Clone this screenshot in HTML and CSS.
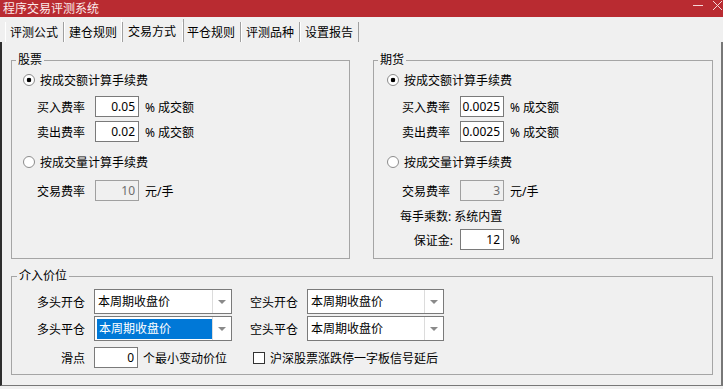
FILE: index.html
```html
<!DOCTYPE html>
<html lang="zh-CN">
<head>
    <meta charset="UTF-8">
    <title>程序交易评测系统</title>
    <link rel="stylesheet" href="styles.css">
</head>
<body>

    <div class="titlebar">
        <span class="title">程序交易评测系统</span>
        <svg class="controls" width="33" height="12" viewBox="0 0 33 12">
            <line x1="3" y1="5.5" x2="13" y2="5.5" stroke="#f4d6d7" stroke-width="1"/>
            <line x1="23" y1="1" x2="32" y2="10" stroke="#f4d6d7" stroke-width="1"/>
            <line x1="32" y1="1" x2="23" y2="10" stroke="#f4d6d7" stroke-width="1"/>
        </svg>
    </div>

    <div class="tabs">
        <div class="tab">评测公式</div>
        <div class="tab">建仓规则</div>
        <div class="tab active">交易方式</div>
        <div class="tab">平仓规则</div>
        <div class="tab">评测品种</div>
        <div class="tab">设置报告</div>
    </div>

    <div class="panel">
        <div class="top-row">
            <fieldset class="group stock">
                <legend>股票</legend>
                <div class="radio-row first">
                    <span class="radio checked"></span>
                    <span>按成交额计算手续费</span>
                </div>
                <div class="field-row fee1">
                    <span class="label">买入费率</span>
                    <input class="num" value="0.05">
                    <span class="unit">% 成交额</span>
                </div>
                <div class="field-row fee2">
                    <span class="label">卖出费率</span>
                    <input class="num" value="0.02">
                    <span class="unit">% 成交额</span>
                </div>
                <div class="radio-row second">
                    <span class="radio"></span>
                    <span>按成交量计算手续费</span>
                </div>
                <div class="field-row rate">
                    <span class="label">交易费率</span>
                    <input class="num" value="10" disabled>
                    <span class="unit">元/手</span>
                </div>
            </fieldset>

            <fieldset class="group futures">
                <legend>期货</legend>
                <div class="radio-row first">
                    <span class="radio checked"></span>
                    <span>按成交额计算手续费</span>
                </div>
                <div class="field-row fee1">
                    <span class="label">买入费率</span>
                    <input class="num" value="0.0025">
                    <span class="unit">% 成交额</span>
                </div>
                <div class="field-row fee2">
                    <span class="label">卖出费率</span>
                    <input class="num" value="0.0025">
                    <span class="unit">% 成交额</span>
                </div>
                <div class="radio-row second">
                    <span class="radio"></span>
                    <span>按成交量计算手续费</span>
                </div>
                <div class="field-row rate">
                    <span class="label">交易费率</span>
                    <input class="num" value="3" disabled>
                    <span class="unit">元/手</span>
                </div>
                <div class="mult-row">每手乘数: 系统内置</div>
                <div class="field-row deposit">
                    <span class="label right">保证金:</span>
                    <input class="num" value="12">
                    <span class="unit">%</span>
                </div>
            </fieldset>
        </div>

        <fieldset class="group entry">
            <legend>介入价位</legend>
            <div class="entry-row">
                <span class="elabel">多头开仓</span>
                <div class="combo">
                    <span class="combo-text">本周期收盘价</span>
                    <span class="combo-btn"><svg width="8" height="4" viewBox="0 0 8 4"><path d="M0 0h8L4 4z" fill="#8a8a8a"/></svg></span>
                </div>
                <span class="elabel second">空头开仓</span>
                <div class="combo">
                    <span class="combo-text">本周期收盘价</span>
                    <span class="combo-btn"><svg width="8" height="4" viewBox="0 0 8 4"><path d="M0 0h8L4 4z" fill="#8a8a8a"/></svg></span>
                </div>
            </div>
            <div class="entry-row">
                <span class="elabel">多头平仓</span>
                <div class="combo active">
                    <span class="combo-text">本周期收盘价</span>
                    <span class="combo-btn"><svg width="8" height="4" viewBox="0 0 8 4"><path d="M0 0h8L4 4z" fill="#8a8a8a"/></svg></span>
                </div>
                <span class="elabel second">空头平仓</span>
                <div class="combo">
                    <span class="combo-text">本周期收盘价</span>
                    <span class="combo-btn"><svg width="8" height="4" viewBox="0 0 8 4"><path d="M0 0h8L4 4z" fill="#8a8a8a"/></svg></span>
                </div>
            </div>
            <div class="entry-row slip">
                <span class="elabel">滑点</span>
                <div class="slip-box">
                    <input class="num" value="0">
                    <span class="slip-unit">个最小变动价位</span>
                </div>
                <span class="check"></span>
                <span class="check-text">沪深股票涨跌停一字板信号延后</span>
            </div>
        </fieldset>
    </div>

</body>
</html>
```

FILE: styles.css
```css
body {
    margin: 0;
    width: 723px;
    height: 389px;
    overflow: hidden;
    background-color: #f0f0f0;
    font-family: "Noto Sans", "Noto Sans CJK SC", sans-serif;
    font-size: 12px;
    color: #000;
}
.titlebar {
    height: 17px;
    background-color: #b92b31;
    color: #fbeaea;
    display: flex;
    justify-content: space-between;
    align-items: flex-start;
    padding-left: 3px;
    line-height: 17px;
}
.controls {
    margin-top: 0;
}
.tabs {
    height: 25px;
    display: flex;
    align-items: flex-end;
    padding-left: 5px;
}
.tab {
    box-sizing: border-box;
    width: 59px;
    height: 20px;
    padding: 2px 0 0 4px;
    line-height: 18px;
    border-left: 1px solid #fff;
    border-right: 1px solid #a0a0a0;
}
.tab.active {
    width: 63px;
    height: 23px;
    padding-top: 4px;
    padding-left: 6px;
    margin: 0 -2px;
}
.panel {
    box-sizing: border-box;
    height: 344px;
    border-left: 2px solid #2e2e2e;
    border-right: 2px solid #777;
    border-bottom: 1px solid #777;
    padding: 10px 0 0 9px;
}
.top-row {
    display: flex;
    gap: 23px;
}
.group {
    box-sizing: border-box;
    margin: 0;
    padding: 0;
    min-width: 0;
    border: 1px solid #a5a5a5;
}
.group legend {
    margin-left: 4px;
    padding: 0 2px;
    line-height: 16px;
}
.stock {
    width: 339px;
    height: 207px;
}
.futures {
    width: 340px;
    height: 207px;
}
.radio-row {
    display: flex;
    align-items: center;
    gap: 5px;
    height: 20px;
    margin-left: 11px;
}
.radio-row.first {
    margin-top: 2px;
}
.radio-row.second {
    margin-top: 10px;
}
.futures .radio-row {
    margin-left: 13px;
}
.radio {
    box-sizing: border-box;
    width: 12px;
    height: 12px;
    border-radius: 50%;
    border: 1px solid #8c8c8c;
    background: #fff;
}
.radio.checked {
    background: radial-gradient(circle, #000 0 2px, #fff 2.6px);
}
.field-row {
    display: flex;
    align-items: center;
    height: 21px;
    padding-left: 25px;
}
.futures .field-row {
    padding-left: 28px;
}
.field-row.fee1 {
    margin-top: 6px;
}
.field-row.fee2 {
    margin-top: 4px;
}
.field-row.rate {
    margin-top: 8px;
}
.field-row.deposit {
    margin-top: 4px;
}
.label {
    width: 58px;
}
.label.right {
    text-align: right;
    padding-right: 7px;
    box-sizing: border-box;
}
.num {
    box-sizing: border-box;
    width: 44px;
    height: 21px;
    margin: 0;
    padding: 0 3px 0 0;
    border: 1px solid #7a7a7a;
    border-radius: 0;
    background: #fff;
    font: inherit;
    color: #000;
    text-align: right;
    outline: none;
}
.num:disabled {
    background: #f0f0f0;
    border-color: #a0a0a0;
    color: #6d6d6d;
}
.unit {
    margin-left: 6px;
}
.mult-row {
    height: 16px;
    line-height: 16px;
    margin-top: 8px;
    padding-left: 26px;
}
.entry {
    width: 702px;
    height: 107px;
    margin-top: 9px;
}
.entry legend {
    margin-left: 5px;
}
.entry-row {
    display: flex;
    align-items: center;
    height: 25px;
    padding-left: 25px;
    margin-top: 2px;
}
.entry-row:first-of-type {
    margin-top: 5px;
}
.entry-row.slip {
    height: 21px;
    margin-top: 6px;
}
.elabel {
    box-sizing: border-box;
    width: 57px;
    padding-right: 9px;
    text-align: right;
}
.elabel.second {
    margin-left: 18px;
}
.combo {
    box-sizing: border-box;
    width: 138px;
    height: 25px;
    display: flex;
    border: 1px solid #7a7a7a;
    background: #fff;
}
.combo + .elabel + .combo {
    width: 137px;
}
.combo-text {
    flex: 1;
    padding-left: 3px;
    line-height: 23px;
}
.combo.active .combo-text {
    margin: 2px 0 1px 2px;
    padding-left: 2px;
    line-height: 20px;
    background-color: #0078d7;
    color: #fff;
}
.combo-btn {
    width: 18px;
    border-left: 1px solid #dcdcdc;
    display: flex;
    align-items: center;
    justify-content: center;
}
.slip-box {
    width: 138px;
    display: flex;
    align-items: center;
}
.slip-unit {
    margin-left: 5px;
    white-space: nowrap;
}
.check {
    box-sizing: border-box;
    width: 12px;
    height: 12px;
    margin-left: 21px;
    border: 1px solid #333;
    background: #fff;
}
.check-text {
    margin-left: 5px;
}
```
